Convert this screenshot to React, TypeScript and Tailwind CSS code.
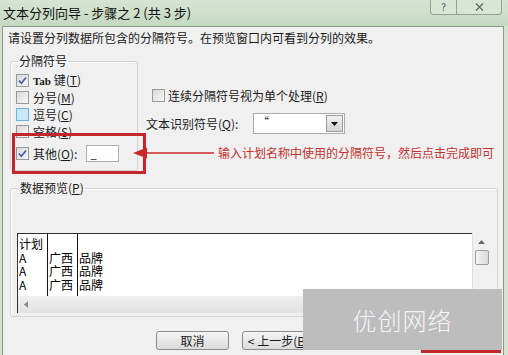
const cjk = "font-['Noto_Sans_CJK_SC','Noto_Sans',sans-serif]";

function Box({ checked = false, hover = false }: { checked?: boolean; hover?: boolean }) {
  return (
    <span
      className={`w-[13px] h-[13px] shrink-0 border flex items-center justify-center ${
        hover ? 'bg-[#c9e8f8] border-[#6fb2dc]' : 'bg-gradient-to-br from-[#d9d9d9] to-[#f7f7f7] border-[#999]'
      }`}
    >
      {checked && (
        <svg width="9" height="9" viewBox="0 0 9 9">
          <path d="M1 4.6 L3.4 7.2 L8 1.4" fill="none" stroke="#3e5ea6" strokeWidth="1.6" />
        </svg>
      )}
    </span>
  );
}

function Check({ label, checked, hover }: { label: React.ReactNode; checked?: boolean; hover?: boolean }) {
  return (
    <div className="h-[17px] flex items-center gap-[4px]">
      <Box checked={checked} hover={hover} />
      <span className="text-[12px] leading-[16px] text-[#1a1a1a]">{label}</span>
    </div>
  );
}

function Btn({ children }: { children: React.ReactNode }) {
  return (
    <div className="w-[73px] h-[19px] border border-[#8a8a8a] rounded-[3px] bg-gradient-to-b from-[#f4f4f4] to-[#dcdcdc] flex items-center justify-center text-[12px] leading-[16px] text-[#1a1a1a]">
      {children}
    </div>
  );
}

const rows = [
  ['计划', '', ''],
  ['A', '广西', '品牌'],
  ['A', '广西', '品牌'],
  ['A', '广西', '品牌'],
];

export default function App() {
  return (
    <div className={`w-[508px] h-[355px] bg-[#d3e2cf] relative overflow-hidden ${cjk}`}>
      {/* title bar */}
      <div className="h-[26px] flex justify-between items-start bg-gradient-to-b from-[#d6e5d2] to-[#c5d9c1]">
        <div className="pl-[3px] pt-[5px] text-[13px] leading-[16px] text-[#111]">文本分列向导 - 步骤之 2 (共 3 步)</div>
        <div className="mr-[6px] flex h-[15px] border border-t-0 border-[#93a393] rounded-b-[4px] bg-[#d9e6d6]">
          <div className="w-[26px] flex items-center justify-center text-[10px] leading-[12px] text-[#555] border-r border-[#93a393]">?</div>
          <div className="w-[44px] flex items-center justify-center">
            <svg width="9" height="8" viewBox="0 0 9 8">
              <path d="M1 0.5 L8 7.5 M8 0.5 L1 7.5" stroke="#666" strokeWidth="1.2" />
            </svg>
          </div>
        </div>
      </div>

      {/* body */}
      <div className="ml-[2px] w-[502px] h-[329px] bg-[#f0f0f0] border-l border-r border-t border-[#8d998d]">
        <div className="pl-[5px] pt-[3px] text-[12px] leading-[16px] text-[#1a1a1a]">
          请设置分列数据所包含的分隔符号。在预览窗口内可看到分列的效果。
        </div>

        <div className="mt-[7px] flex items-start">
          <fieldset className="ml-[7px] w-[128px] h-[118px] border border-[#d3d3d3] rounded-[3px] shadow-[inset_1px_1px_0_#fff] pl-[5px] pt-[3px]">
            <legend className="ml-[2px] px-[1px] text-[12px] leading-[16px] text-[#1a1a1a]">分隔符号</legend>
            <Check checked label={<><span className="font-['Liberation_Serif',serif] font-bold text-[11px]">Tab</span> 键(<u>T</u>)</>} />
            <Check label={<>分号(<u>M</u>)</>} />
            <Check hover label={<>逗号(<u>C</u>)</>} />
            <Check label={<>空格(<u>S</u>)</>} />
            <div className="mt-[5px] h-[17px] flex items-center">
              <Box checked />
              <span className="ml-[4px] text-[12px] leading-[16px] text-[#1a1a1a]">其他(<u>O</u>):</span>
              <div className="ml-[9px] w-[33px] h-[17px] bg-white border border-[#abadb3] pl-[3px] text-[11px] leading-[14px] text-[#111]">_</div>
            </div>
          </fieldset>

          <div className="ml-[8px] mt-[34px] flex flex-col">
            <div className="pl-[6px] h-[17px] flex items-center gap-[3px]">
              <Box />
              <span className="text-[12px] leading-[16px] text-[#1a1a1a]">连续分隔符号视为单个处理(<u>R</u>)</span>
            </div>
            <div className="mt-[9px] flex items-center">
              <span className="w-[107px] text-[12px] leading-[16px] text-[#1a1a1a]">文本识别符号(<u>Q</u>):</span>
              <div className="w-[92px] h-[21px] bg-white border border-[#abadb3] flex">
                <div className="flex-1 pl-[4px] text-[11px] leading-[14px] text-[#222]">“</div>
                <div className="w-[17px] m-[1px] border border-[#9a9a9a] bg-gradient-to-b from-[#f2f2f2] to-[#d4d4d4] flex items-center justify-center">
                  <svg width="7" height="4" viewBox="0 0 7 4">
                    <path d="M0 0 L7 0 L3.5 4 Z" fill="#111" />
                  </svg>
                </div>
              </div>
            </div>
          </div>
        </div>

        <fieldset className="mt-[9px] ml-[7px] w-[488px] h-[137px] border border-[#d3d3d3] rounded-[3px] shadow-[inset_1px_1px_0_#fff] pl-[6px] pt-[37px]">
          <legend className="ml-[2px] px-[1px] text-[12px] leading-[16px] text-[#1a1a1a]">数据预览(<u>P</u>)</legend>
          <div className="w-[473px] flex flex-col">
            <div className="h-[63px] flex">
              <div className="flex-1 bg-white border-t border-l border-[#333] flex overflow-hidden">
                {[0, 1, 2].map((c) => (
                  <div
                    key={c}
                    className={`flex flex-col pt-[3px] ${c < 2 ? 'w-[30px] border-r border-[#111]' : 'flex-1'}`}
                  >
                    {rows.map((r, i) => (
                      <div key={i} className="h-[13.5px] shrink-0 pl-[1px] text-[12px] leading-[13.5px] text-[#000] whitespace-nowrap">
                        {r[c]}
                      </div>
                    ))}
                  </div>
                ))}
              </div>
              <div className="w-[18px] bg-[#f0f0f0] border-l border-[#ddd] flex flex-col items-center pt-[7px]">
                <svg width="7" height="4" viewBox="0 0 7 4">
                  <path d="M0 4 L7 4 L3.5 0 Z" fill="#666" />
                </svg>
                <div className="mt-[6px] w-[14px] h-[15px] border border-[#9c9c9c] rounded-[2px] bg-gradient-to-r from-[#f4f4f4] to-[#dadada]" />
                <div className="flex-1" />
              </div>
            </div>
            <div className="h-[17px] flex">
              <div className="flex-1 bg-gradient-to-b from-[#efefef] to-[#e2e2e2] border-l border-[#333] flex items-center pl-[6px]">
                <svg width="4" height="7" viewBox="0 0 4 7">
                  <path d="M4 0 L4 7 L0 3.5 Z" fill="#888" />
                </svg>
              </div>
              <div className="w-[18px] bg-[#f0f0f0]" />
            </div>
          </div>
        </fieldset>

        <div className="mt-[14px] flex justify-end pr-[5px]">
          <div className="flex gap-[13px]">
            <Btn>取消</Btn>
            <Btn>&lt; 上一步(<u>B</u>)</Btn>
            <Btn>下一步(<u>N</u>) &gt;</Btn>
          </div>
          <div className="ml-[24px]">
            <Btn>完成(<u>F</u>)</Btn>
          </div>
        </div>
      </div>

      {/* annotation */}
      <div className="absolute left-[12px] top-[133px] w-[134px] h-[41px] border-[3px] border-[#c5262b]" />
      <svg className="absolute left-[131px] top-[147px]" width="84" height="12" viewBox="0 0 84 12">
        <path d="M2 6 L16 0.5 L16 11.5 Z" fill="#c8282c" />
        <path d="M14 6 L83 6" stroke="#c8282c" strokeWidth="1.5" />
      </svg>
      <div className="absolute left-[218px] top-[145px] text-[12px] leading-[16px] text-[#c3302e]">
        输入计划名称中使用的分隔符号，然后点击完成即可
      </div>
      <div className="absolute left-[421px] top-[326px] w-[80px] h-[27px] border-[3px] border-[#c5262b]" />

      {/* watermark */}
      <div className="absolute left-[303px] top-[289px] w-[199px] h-[61px] bg-[#bdbdbd] flex items-center justify-center">
        <span className="text-[24px] leading-[30px] text-[#f6f6f6] tracking-[1px] font-light">优创网络</span>
      </div>
    </div>
  );
}
